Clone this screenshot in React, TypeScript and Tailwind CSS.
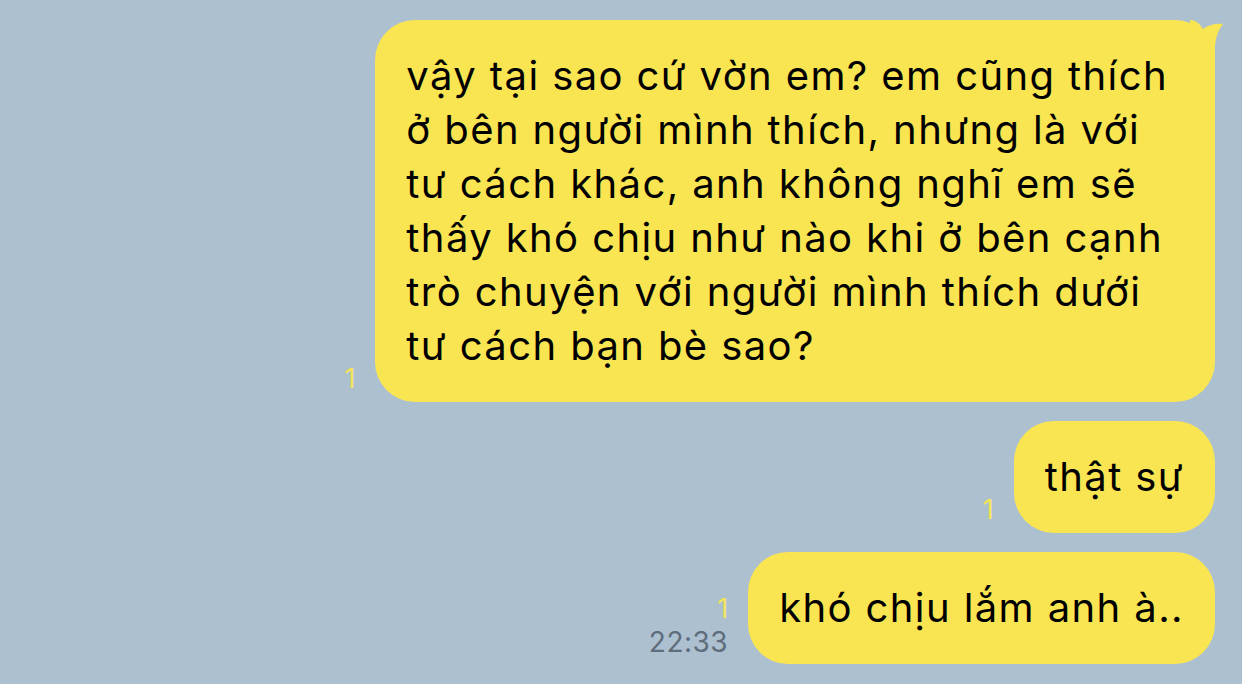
import React from "react";

const font = { fontFamily: "Inter, 'Noto Sans', sans-serif" };

type Msg = { lines: string[]; time?: string; tail?: boolean };

const messages: Msg[] = [
  {
    lines: [
      "vậy tại sao cứ vờn em? em cũng thích",
      "ở bên người mình thích, nhưng là với",
      "tư cách khác, anh không nghĩ em sẽ",
      "thấy khó chịu như nào khi ở bên cạnh",
      "trò chuyện với người mình thích dưới",
      "tư cách bạn bè sao?",
    ],
    tail: true,
  },
  { lines: ["thật sự"] },
  { lines: ["khó chịu lắm anh à.."], time: "22:33" },
];

const Bubble = ({ msg }: { msg: Msg }) => (
  <div className="flex items-end justify-end gap-[20px]">
    <div className="flex flex-col items-end pb-[6px] leading-none">
      <span className="text-[27px] text-[#f3e45a] leading-[34px]">1</span>
      {msg.time && (
        <span className="text-[28px] tracking-[0.5px] text-[#5e6d7c] leading-[32px]">{msg.time}</span>
      )}
    </div>
    <div
      className={`relative rounded-[40px] bg-[#f9e551] pl-[31px] py-[29px] text-[40px] tracking-[1.4px] leading-[54px] text-black whitespace-nowrap ${
        msg.tail ? "pr-[47px]" : "pr-[31px]"
      }`}
    >
      {msg.lines.map((l, i) => (
        <div key={i}>{l}</div>
      ))}
      {msg.tail && (
        <svg className="absolute -right-[9px] top-0" width="34" height="50" viewBox="0 0 34 50">
          <path d="M0 0 C6 0 10 4 13 9 C18 5 26 3 33 4 C29 9 26 16 25 26 L25 50 L0 50 Z" fill="#f9e551" />
        </svg>
      )}
    </div>
  </div>
);

export default function App() {
  return (
    <div
      className="w-[1242px] h-[684px] overflow-hidden bg-[#adc0d0] pt-[20px] pr-[27px] flex flex-col gap-[19px]"
      style={font}
    >
      {messages.map((m, i) => (
        <Bubble key={i} msg={m} />
      ))}
    </div>
  );
}
